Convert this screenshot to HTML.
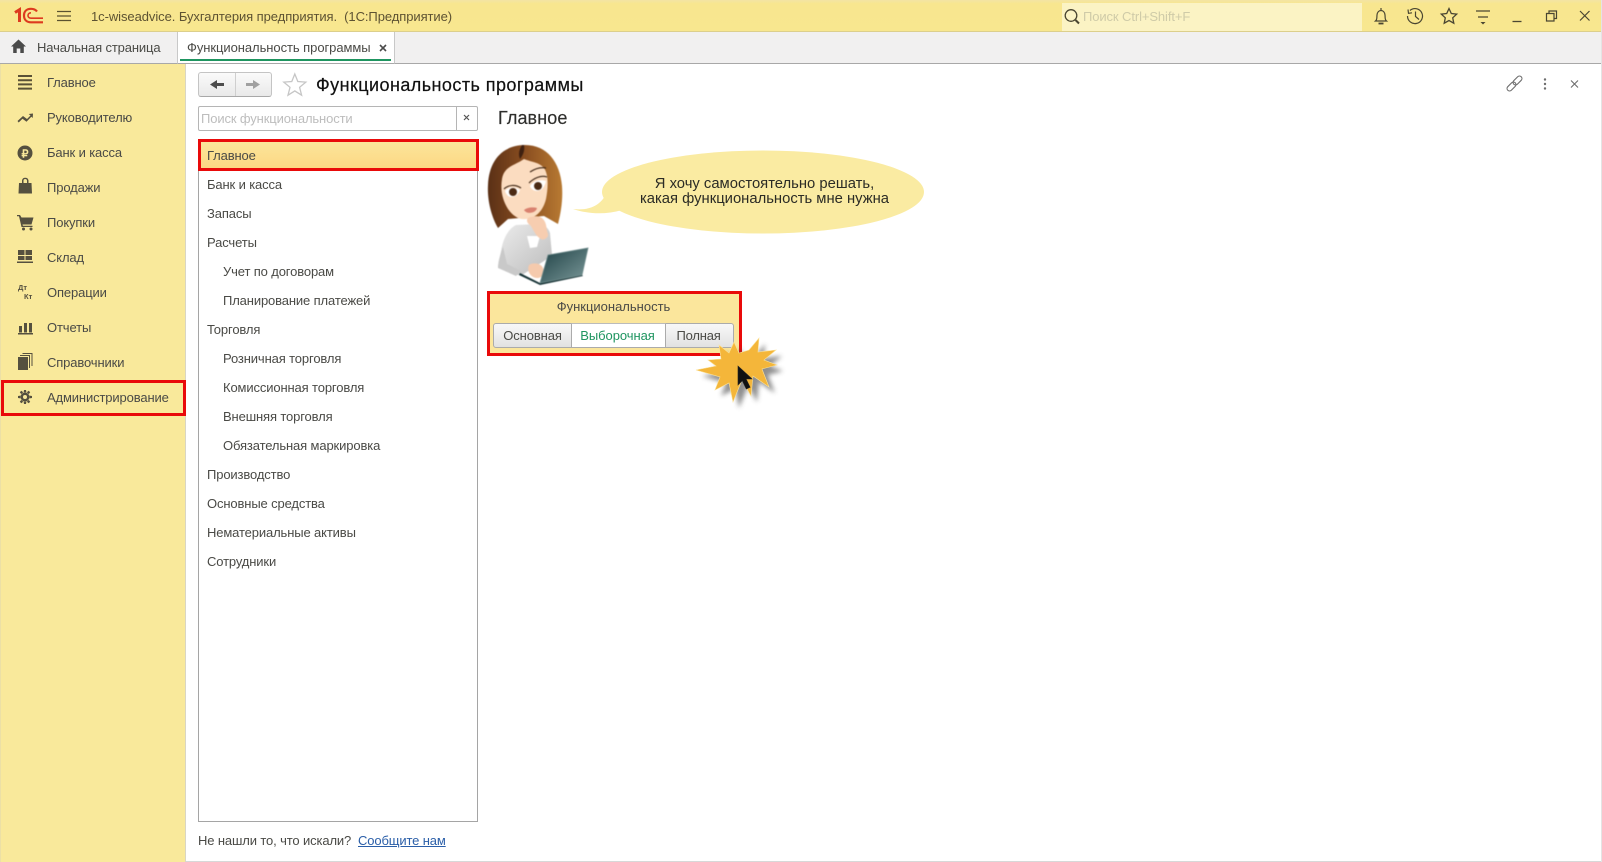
<!DOCTYPE html>
<html lang="ru"><head><meta charset="utf-8"><title>Функциональность программы</title>
<style>
*{box-sizing:border-box}
html,body{margin:0;padding:0;background:#fff}
body{width:1602px;height:862px;position:relative;overflow:hidden;font-family:"Liberation Sans",sans-serif;font-size:13px;color:#4a4a46}
.a{position:absolute;white-space:nowrap}
.t{position:absolute;white-space:nowrap;line-height:16px;letter-spacing:-.13px;margin-top:1px}
svg{position:absolute;overflow:visible}
</style></head><body>
<!-- header -->
<div class="a" style="left:0;top:0;width:1601px;height:32px;background:linear-gradient(#f3e4a4,#f8e68f 12%,#f8e78f);border-bottom:1px solid #dccf8c"></div>
<div class="a" style="left:1062px;top:3px;width:300px;height:28px;background:#fbf3c4"></div>
<svg style="left:0;top:0" width="1602" height="32">
<g fill="none" stroke="#dd3a1f" stroke-width="2.2">
<path d="M15 12.500l4.500-2.800V22" stroke-width="3"/>
<path d="M37 11.500C35.500 9.500 33 8.800 31 8.800 26.500 8.800 24 11.500 24 15.500s2.500 6.800 7 6.800H43"/>
<path d="M31 12.800c-1.800 0-3 1.200-3 2.700s1.200 2.700 3 2.700H43" stroke-width="1.600"/>
</g>
<path d="M57 11.500H71M57 16H71M57 20.500H71" stroke="#5a5230" stroke-width="1.300"/>
<g fill="none" stroke="#4a4632">
<circle cx="1071" cy="15.500" r="5.800" stroke-width="1.300"/><path d="M1075.500 20l3.500 3.500" stroke-width="2"/>
<path d="M1375.500 21c1.800-1.500 1.200-3 1.500-6 .3-2.800 2-4.500 4-4.500s3.700 1.700 4 4.500c.3 3-.3 4.500 1.500 6z" stroke-width="1.200"/><path d="M1378.500 23.500h5" stroke-width="1.800"/><path d="M1381 8v2.500" stroke-width="1.200"/>
<path d="M1410 10.500a7.500 7.500 0 1 1-2.500 5.500" stroke-width="1.200"/><path d="M1408 9.500l.5 3.800 3.500-.5M1415.500 11.500v5l3.500 3" stroke-width="1.200"/>
<path d="M1449 8.500l2.300 5 5.400.6-4 3.700 1.100 5.400-4.800-2.700-4.800 2.700 1.100-5.400-4-3.700 5.400-.6z" stroke-width="1.300"/>
<path d="M1476 11h14M1478 17h10" stroke-width="1.200"/><path d="M1480.500 22h5l-2.500 2.500z" fill="#4a4632" stroke="none"/>
<path d="M1512.500 21.500h9" stroke-width="1.300"/>
<path d="M1546.500 13.500h7.500v7.500h-7.500zM1549 13.500v-2.500h7.500v7.500h-2.500" stroke-width="1.200"/>
<path d="M1580 11l9.500 9.500M1589.500 11L1580 20.500" stroke-width="1.200"/>
</g>
</svg>
<div class="t" style="left:91px;top:8px;color:#5d5232;letter-spacing:-.07px">1c-wiseadvice. Бухгалтерия предприятия.&nbsp; (1С:Предприятие)</div>
<div class="t" style="left:1083px;top:8px;color:#cfcba8;letter-spacing:-.1px">Поиск Ctrl+Shift+F</div>
<!-- tabs -->
<div class="a" style="left:0;top:32px;width:1601px;height:32px;background:#f1f0f0;border-bottom:1px solid #a8a8a8"></div>
<div class="a" style="left:177px;top:32px;width:218px;height:32px;background:#fff;border-left:1px solid #c8c8c8;border-right:1px solid #c8c8c8;border-bottom:1px solid #a8a8a8"></div>
<div class="a" style="left:180px;top:59px;width:211px;height:2px;background:#1f9560"></div>
<svg style="left:0;top:31px" width="30" height="30"><path d="M18.500 8.500l7.500 7h-2.200v6.500h-3.500v-4.500h-3.600v4.500h-3.500v-6.500H11z" fill="#4a4a4a"/></svg>
<div class="t" style="left:37px;top:39px">Начальная страница</div>
<div class="t" style="left:187px;top:39px;letter-spacing:-.06px">Функциональность программы</div>
<svg style="left:379px;top:44px" width="10" height="10"><path d="M1 1l6 6M7 1L1 7" stroke="#4a4a4a" stroke-width="1.600"/></svg>
<!-- sidebar -->
<div class="a" style="left:0;top:64px;width:186px;height:798px;background:#f9e99b;border-right:1px solid #d9d6c4;border-left:1px solid #ece0a6"></div>
<div class="a" style="left:1px;top:380px;width:185px;height:36px;border:3px solid #e90a0a"></div>
<svg style="left:0;top:64px" width="186" height="360">
<g fill="#55503f">
<path d="M18 11h14v2H18zM18 15.200h14v2H18zM18 19.400h14v2H18zM18 23.600h14v2H18z" fill="#5a5136"/>
<path d="M17.500 57l5.500-5 4 3 3.500-3.500-1.800-1.500 4.300-.5-.3 4.500-1.400-1.300-4.800 5-4-3-3.800 3.800z"/>
<circle cx="25" cy="89" r="7.500"/>
<path d="M22 119h-3l-.5 10.500h13.500l-.5-10.500h-3v-2.500a3.300 3.300 0 0 0-6.500 0zM23.500 119v-2.500c0-1 .8-1.500 1.700-1.500s1.800.5 1.800 1.500v2.500z"/>
<path d="M17 151h3l1.500 2.500h12l-2 7H22.500l.4 1.200h9.600v1.300H21.500L19 152.300h-2z"/><circle cx="23.500" cy="165" r="1.500"/><circle cx="31" cy="165" r="1.500"/>
<path d="M18 186h6.500v5H18zM25.500 186H32v5h-6.500zM18 192h6.500v4H18zM25.500 192H32v4h-6.500zM17 197.500h16v1.500H17z"/>
<path d="M19 262h3v6.500h-3zM24 259h3v9.500h-3zM29 259h3v9.500h-3zM18 269h15v1.500H18z"/>
<path d="M18 293h10v13H18z"/><path d="M20 291h10v13h-1V292H20zM22.500 289h10v13h-1V290h-9z"/>
<circle cx="25" cy="333" r="4.500"/>
<path d="M24 326h2l.4 2.400h-2.800zM24 340h2l.4-2.400h-2.800zM18 332v2l2.400.4v-2.800zM32 332v2l-2.400.4v-2.800zM19.800 328.200l1.500-1.500 1.900 1.500-1.900 1.900zM30.200 337.800l-1.500 1.500-1.900-1.500 1.900-1.900zM19.800 337.800l1.500 1.500 1.900-1.500-1.900-1.900zM30.200 328.200l-1.500-1.500-1.900 1.500 1.900 1.900z"/>
</g>
<text x="25" y="93.300" font-size="11" font-weight="bold" fill="#f9e99b" text-anchor="middle" font-family="Liberation Sans">₽</text>
<circle cx="25" cy="333" r="2" fill="#f9e99b"/>
<text x="18" y="226" font-size="7.500" font-weight="bold" fill="#55503f" font-family="Liberation Sans">Дт</text>
<text x="24" y="235" font-size="7.500" font-weight="bold" fill="#55503f" font-family="Liberation Sans">Кт</text>
</svg>
<div class="t" style="left:47px;top:74px">Главное</div>
<div class="t" style="left:47px;top:109px">Руководителю</div>
<div class="t" style="left:47px;top:144px">Банк и касса</div>
<div class="t" style="left:47px;top:179px">Продажи</div>
<div class="t" style="left:47px;top:214px">Покупки</div>
<div class="t" style="left:47px;top:249px">Склад</div>
<div class="t" style="left:47px;top:284px">Операции</div>
<div class="t" style="left:47px;top:319px">Отчеты</div>
<div class="t" style="left:47px;top:354px">Справочники</div>
<div class="t" style="left:47px;top:389px">Администрирование</div>
<!-- toolbar -->
<div class="a" style="left:198px;top:72px;width:74px;height:25px;border:1px solid #c4c4c4;border-bottom-color:#a8a8a8;border-radius:3px;background:linear-gradient(#fafafa,#e9e9e9)"></div>
<div class="a" style="left:235px;top:73px;width:1px;height:23px;background:#cfcfcf"></div>
<svg style="left:198px;top:72px" width="74" height="25">
<path d="M12 12.500L19 8v3h7v3h-7v3z" fill="#4d4d4d"/>
<path d="M62 12.500L55 8v3h-7v3h7v3z" fill="#a0a0a0"/>
</svg>
<svg style="left:283px;top:73px" width="24" height="24"><path d="M11.800 1l3 7.500 8 .6-6.200 5.200 2 7.900-6.800-4.300-6.800 4.300 2-7.900L.8 9.100l8-.6z" fill="#fff" stroke="#c6c6c6" stroke-width="1.300"/></svg>
<div class="a" style="left:316px;top:74px;font-size:18px;line-height:22px;color:#111;letter-spacing:.44px;-webkit-text-stroke:.2px #111">Функциональность программы</div>
<svg style="left:1500px;top:70px" width="90" height="30">
<g fill="none" stroke="#6d6d6d" stroke-width="1.100">
<g transform="rotate(-45 14.500 13.500)"><rect x="5" y="11" width="10.500" height="5" rx="2.500"/><rect x="13.500" y="11" width="10.500" height="5" rx="2.500"/></g>
<path d="M71 10.500l7 7M78 10.500l-7 7"/>
</g>
<g fill="#6d6d6d"><circle cx="45" cy="9.500" r="1.200"/><circle cx="45" cy="14" r="1.200"/><circle cx="45" cy="18.500" r="1.200"/></g>
</svg>
<!-- search -->
<div class="a" style="left:198px;top:106px;width:280px;height:25px;border:1px solid #b5b5b5;border-radius:2px;background:#fff"></div>
<div class="a" style="left:456px;top:107px;width:1px;height:23px;background:#b5b5b5"></div>
<div class="t" style="left:201px;top:110px;color:#bdbdbd">Поиск функциональности</div>
<svg style="left:463px;top:114px" width="9" height="9"><path d="M1 1l5 5M6 1L1 6" stroke="#555" stroke-width="1.200"/></svg>
<!-- list -->
<div class="a" style="left:198px;top:139px;width:280px;height:683px;border:1px solid #a5a5a5;background:#fff"></div>
<div class="a" style="left:198px;top:139px;width:281px;height:32px;border:3px solid #e90a0a;background:linear-gradient(#fbe59a,#fcd884)"></div>
<div class="t" style="left:207px;top:147px">Главное</div>
<div class="t" style="left:207px;top:176px">Банк и касса</div>
<div class="t" style="left:207px;top:205px">Запасы</div>
<div class="t" style="left:207px;top:234px">Расчеты</div>
<div class="t" style="left:223px;top:263px">Учет по договорам</div>
<div class="t" style="left:223px;top:292px">Планирование платежей</div>
<div class="t" style="left:207px;top:321px">Торговля</div>
<div class="t" style="left:223px;top:350px">Розничная торговля</div>
<div class="t" style="left:223px;top:379px">Комиссионная торговля</div>
<div class="t" style="left:223px;top:408px">Внешняя торговля</div>
<div class="t" style="left:223px;top:437px">Обязательная маркировка</div>
<div class="t" style="left:207px;top:466px">Производство</div>
<div class="t" style="left:207px;top:495px">Основные средства</div>
<div class="t" style="left:207px;top:524px">Нематериальные активы</div>
<div class="t" style="left:207px;top:553px">Сотрудники</div>
<div class="t" style="left:198px;top:832px">Не нашли то, что искали?</div>
<div class="t" style="left:358px;top:832px;color:#2a5ea8;text-decoration:underline">Сообщите нам</div>
<div class="a" style="left:186px;top:861px;width:1416px;height:1px;background:#d8d8d8"></div>
<div class="a" style="left:1601px;top:0;width:1px;height:862px;background:#e4e4e4"></div>
<!-- heading -->
<div class="a" style="left:498px;top:107px;font-size:18px;line-height:22px;color:#2e2e2c;letter-spacing:.1px;-webkit-text-stroke:.15px #2e2e2c">Главное</div>
<!-- character -->
<svg style="left:480px;top:135px;filter:blur(.5px)" width="120" height="160" viewBox="480 135 120 160">
<defs>
<linearGradient id="lap" x1="0" y1="0" x2="1" y2="1"><stop offset="0" stop-color="#1d4044"/><stop offset="1" stop-color="#7d9a9b"/></linearGradient>
<linearGradient id="hair" x1="0" y1="0" x2="1" y2="0"><stop offset="0" stop-color="#5a3016"/><stop offset=".5" stop-color="#8a4e20"/><stop offset="1" stop-color="#b87a32"/></linearGradient>
<linearGradient id="jk" x1="0" y1="0" x2="1" y2="1"><stop offset="0" stop-color="#ececec"/><stop offset="1" stop-color="#bcbcbc"/></linearGradient>
</defs>
<path d="M516 225c-8 4-13 14-15 26l-3 16 16 8 8 0 22-14 8-6-2-22c-2-6-6-8-12-9z" fill="url(#jk)"/>
<path d="M503 247c-3 8-5 15-5 21l18 8 5-5-14-7z" fill="#c9c9c9"/>
<path d="M527 236l3 12 7-1 3-11z" fill="#fff"/>
<path d="M525 145c-22 0-36 15-37 40-1 16 4 33 10 43l10-9 36-3 14 8c3-12 5-24 4-38-2-24-15-41-37-41z" fill="url(#hair)"/>
<path d="M522 145c-3 5-4 9-2 14 3-4 5-8 4-14z" fill="#3f2010"/>
<path d="M524 159c-8 6-20 7-22 20-2 12 1 22 6 30 5 7 11 11 18 10 10-1 17-8 20-20 2-10 3-24-2-31-5-6-13-6-20-9z" fill="#fbdcc0"/>
<path d="M505 191c3-4 10-5 15-1-2 5-5 7-9 7-3 0-5-3-6-6z" fill="#fff"/><circle cx="513" cy="192" r="4" fill="#4b2a14"/>
<path d="M530 186c3-5 10-7 16-5-1 5-4 10-9 10-3 0-6-2-7-5z" fill="#fff"/><circle cx="538" cy="186" r="4" fill="#4b2a14"/>
<path d="M504 189c4-4 11-5 17-1M529 183c5-5 12-8 18-6M530 172c6-4 11-5 16-4" stroke="#3a2312" stroke-width="1.100" fill="none"/>
<path d="M524 210c4-3 9-3 13-2-1 5-10 7-13 2z" fill="#d9816f"/>
<path d="M528 218c5-2 11-3 15 1 4 4 3 10 5 15 1 3-4 7-7 5-6-3-8-11-11-14-3-2-4-5-2-7z" fill="#f7cdb0"/>
<path d="M529 265c4-3 12-2 14 3 2 6-1 10-6 10-5 0-11-6-8-13z" fill="#f5caad"/>
<path d="M520 273l20 10 42-8 1 1-43 9-21-10z" fill="#173336"/>
<path d="M548 255l40-7-6 27-42 8z" fill="url(#lap)" stroke="#6f8c8c" stroke-width=".8"/>
</svg>
<!-- bubble -->
<svg style="left:570px;top:145px" width="365" height="100">
<ellipse cx="193" cy="47" rx="161" ry="41.500" fill="#faeba2"/>
<path d="M3 64C20 66 33 60 38 44L52 65C35 70 18 69 3 64z" fill="#faeba2"/>
</svg>
<div class="a" style="left:604px;top:176px;width:321px;text-align:center;font-size:14.800px;line-height:15px;color:#2b2b25;white-space:normal;margin-top:1px">Я хочу самостоятельно решать,<br>какая функциональность мне нужна</div>
<!-- functionality panel -->
<div class="a" style="left:487px;top:291px;width:255px;height:65px;border:3px solid #e90a0a;background:#fbe69c"></div>
<div class="t" style="left:486px;top:299px;width:255px;text-align:center;letter-spacing:0;margin-top:0">Функциональность</div>
<div class="a" style="left:493px;top:323px;width:241px;height:25px;border:1px solid #ababab;border-radius:3px;background:linear-gradient(#f8f8f8,#e2e2e2)"></div>
<div class="a" style="left:571px;top:323px;width:95px;height:25px;background:#fff;border:1px solid #ababab;border-top-color:#bbb"></div>
<div class="t" style="left:494px;top:328px;width:77px;text-align:center;letter-spacing:-.1px;margin-top:0">Основная</div>
<div class="t" style="left:570px;top:328px;width:95px;text-align:center;color:#1f9560;letter-spacing:-.05px;margin-top:0">Выборочная</div>
<div class="t" style="left:665px;top:328px;width:67px;text-align:center;letter-spacing:-.2px;margin-top:0">Полная</div>
<!-- burst -->
<svg style="left:691px;top:330px" width="100" height="80">
<defs><filter id="sh"><feGaussianBlur stdDeviation="2.500"/></filter></defs>
<path transform="translate(6 6)" opacity=".6" filter="url(#sh)" fill="#444" d="M43 12L48 23 58 20 68 8 67 22 85 20 73 30 86 35 71 39 78 57 62 46 60 66 51 50 42 72 38 53 24 60 29 47 5 40 25 36 17 30 30 29 28 15 38 23z"/>
<path fill="#f4b63a" stroke="#fbe29a" stroke-width=".6" d="M43 12L48 23 58 20 68 8 67 22 85 20 73 30 86 35 71 39 78 57 62 46 60 66 51 50 42 72 38 53 24 60 29 47 5 40 25 36 17 30 30 29 28 15 38 23z"/>
<path d="M47 36v19l4.300-4.300 4 8.300 3.800-1.800-4-8.200h6z" fill="#111" stroke="#222" stroke-width=".6"/>
</svg>
</body></html>
